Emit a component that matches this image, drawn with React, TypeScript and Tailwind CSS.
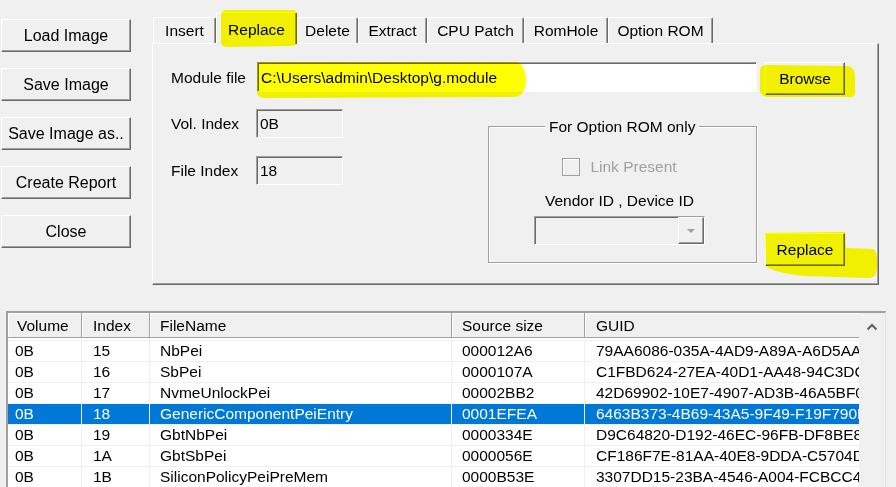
import React from 'react';

type Row = {
  volume: string;
  index: string;
  name: string;
  size: string;
  guid: string;
  selected?: boolean;
};

const rows: Row[] = [
  { volume: '0B', index: '15', name: 'NbPei', size: '000012A6', guid: '79AA6086-035A-4AD9-A89A-A6D5AA27F0E2' },
  { volume: '0B', index: '16', name: 'SbPei', size: '0000107A', guid: 'C1FBD624-27EA-40D1-AA48-94C3DC5C7E0D' },
  { volume: '0B', index: '17', name: 'NvmeUnlockPei', size: '00002BB2', guid: '42D69902-10E7-4907-AD3B-46A5BF0A1C4B' },
  { volume: '0B', index: '18', name: 'GenericComponentPeiEntry', size: '0001EFEA', guid: '6463B373-4B69-43A5-9F49-F19F790D5A11', selected: true },
  { volume: '0B', index: '19', name: 'GbtNbPei', size: '0000334E', guid: 'D9C64820-D192-46EC-96FB-DF8BE8A0C2E7' },
  { volume: '0B', index: '1A', name: 'GbtSbPei', size: '0000056E', guid: 'CF186F7E-81AA-40E8-9DDA-C5704D3B0E92' },
  { volume: '0B', index: '1B', name: 'SiliconPolicyPeiPreMem', size: '0000B53E', guid: '3307DD15-23BA-4546-A004-FCBCC47D87A5' },
];

const tabs = ['Insert', 'Replace', 'Delete', 'Extract', 'CPU Patch', 'RomHole', 'Option ROM'];
const tabWidths: Record<string, string> = {
  Insert: 'w-[63px]',
  Replace: 'w-[81px]',
  Delete: 'w-[61px]',
  Extract: 'w-[69px]',
  'CPU Patch': 'w-[97px]',
  RomHole: 'w-[84px]',
  'Option ROM': 'w-[105px]',
};

const raised =
  'border border-t-white border-l-white border-r-[#696969] border-b-[#696969] shadow-[inset_-1px_-1px_0_#a0a0a0] bg-[#f0f0f0]';
const sunken =
  'border border-t-[#a0a0a0] border-l-[#a0a0a0] border-r-white border-b-white shadow-[inset_1px_1px_0_#696969]';

function Button({ label, className = '' }: { label: string; className?: string }) {
  return <div className={`flex items-center justify-center ${raised} ${className}`}>{label}</div>;
}

function Highlights() {
  // marker strokes drawn over the screenshot
  return (
    <svg
      className="pointer-events-none absolute left-0 top-0 z-20 mix-blend-multiply"
      width="896"
      height="487"
      viewBox="0 0 896 487"
    >
      <g fill="#ffff00">
        <path d="M221,14 Q222,10 227,10 L292,10 Q297,10 297,15 L297,42 Q297,46 291,46 L228,47 Q221,47 221,42 Z" />
        <path d="M257,62 L516,62 Q525,64 526,79 Q526,96 514,97 L263,98 Q257,97 257,92 Z" />
        <path d="M760,69 Q761,65 767,65 L848,66 Q855,67 855,78 L855,94 Q854,98 847,97 L767,97 Q760,96 760,90 Z" />
        <path d="M765,233 L845,232 L846,248 L873,249 Q878,251 877,268 Q877,278 868,278 L805,276 Q774,273 766,266 Z" />
      </g>
    </svg>
  );
}

export default function App() {
  return (
    <div className="relative h-[487px] w-[896px] overflow-hidden bg-[#f0f0f0] font-['Liberation_Sans',Arial,sans-serif] text-[15.5px] leading-[19px] text-black">
      <div className="flex">
        <div className="flex w-[131px] flex-col gap-[16px] pl-[1px] pt-[19px] text-[16px]">
          <Button label="Load Image" className="h-[33px]" />
          <Button label="Save Image" className="h-[33px]" />
          <Button label="Save Image as.." className="h-[33px]" />
          <Button label="Create Report" className="h-[33px]" />
          <Button label="Close" className="h-[33px]" />
        </div>

        <div className="ml-[21px] pt-[12px]">
          <div className="ml-[1px] flex h-[31px] items-end">
            {tabs.map((t) =>
              t === 'Replace' ? (
                <div
                  key={t}
                  className={`relative z-10 -mb-px flex h-[32px] items-start justify-center rounded-t-[2px] border-l border-t border-white bg-[#f0f0f0] pt-[7px] shadow-[inset_-1px_0_0_#a0a0a0] ${tabWidths[t]} border-r border-r-[#696969]`}
                >
                  {t}
                </div>
              ) : (
                <div
                  key={t}
                  className={`flex h-[26px] items-center justify-center rounded-t-[2px] border-l border-t border-white border-r border-r-[#696969] shadow-[inset_-1px_0_0_#a0a0a0] ${tabWidths[t]}`}
                >
                  {t}
                </div>
              ),
            )}
          </div>

          <div className="h-[242px] w-[727px] border border-t-white border-l-white border-r-[#696969] border-b-[#696969] shadow-[inset_-1px_-1px_0_#a0a0a0]">
            <div className="flex items-start pl-[18px] pt-[18px]">
              <div className="flex h-[30px] w-[86px] items-center">Module file</div>
              <div className={`flex h-[30px] w-[500px] items-center bg-white pl-[3px] ${sunken}`}>
                C:\Users\admin\Desktop\g.module
              </div>
              <Button label="Browse" className="ml-[8px] h-[33px] w-[80px]" />
            </div>

            <div className="flex items-start pl-[18px]">
              <div className="w-[317px]">
                <div className="mt-[14px] flex items-center">
                  <div className="w-[85px]">Vol. Index</div>
                  <div className={`flex h-[29px] w-[87px] items-center pl-[3px] ${sunken}`}>0B</div>
                </div>
                <div className="mt-[18px] flex items-center">
                  <div className="w-[85px]">File Index</div>
                  <div className={`flex h-[29px] w-[87px] items-center pl-[3px] ${sunken}`}>18</div>
                </div>
              </div>

              <div className="relative mt-[31px] h-[137px] w-[269px] border border-[#a0a0a0] shadow-[inset_1px_1px_0_#fff,1px_1px_0_#fff]">
                <div className="absolute left-[56px] top-[-10px] bg-[#f0f0f0] px-[4px] whitespace-nowrap">
                  For Option ROM only
                </div>
                <div className="flex flex-col items-center pr-[6px] pt-[30px]">
                  <div className="flex items-center gap-[10px]">
                    <div className="h-[18px] w-[18px] border border-[#a0a0a0] bg-[#f0f0f0] shadow-[inset_1px_1px_0_#fff]" />
                    <span className="text-[#a0a0a0]">Link Present</span>
                  </div>
                  <div className="mt-[15px]">Vendor ID , Device ID</div>
                  <div className={`mt-[6px] flex h-[29px] w-[171px] justify-end bg-[#f0f0f0] ${sunken}`}>
                    <div className={`flex h-full w-[26px] items-center justify-center ${raised}`}>
                      <svg width="10" height="6" viewBox="0 0 10 6">
                        <path d="M1,1 L9,1 L5,5 Z" fill="#a0a0a0" />
                      </svg>
                    </div>
                  </div>
                </div>
              </div>

              <Button label="Replace" className="ml-[8px] mt-[138px] h-[33px] w-[80px]" />
            </div>
          </div>
        </div>
      </div>

      <div className="ml-[6px] mt-[26px] flex h-[176px] w-[880px] border-l-2 border-t-2 border-r border-[#a0a0a0] border-r-[#e3e3e3] bg-white">
        <div className="w-[851px] overflow-hidden">
          <div className="flex h-[25px] bg-[#f0f0f0] whitespace-nowrap">
            {[
              ['Volume', 'w-[74px] pl-[9px]'],
              ['Index', 'w-[68px] pl-[11px]'],
              ['FileName', 'w-[302px] pl-[10px]'],
              ['Source size', 'w-[133px] pl-[10px]'],
              ['GUID', 'w-[300px] pl-[11px]'],
            ].map(([h, cls]) => (
              <div
                key={h}
                className={`flex shrink-0 items-center border-b border-r border-[#a0a0a0] shadow-[inset_1px_1px_0_#fff] ${cls}`}
              >
                {h}
              </div>
            ))}
          </div>
          <div className="pt-[2px]">
            {rows.map((r) => (
              <div
                key={r.index}
                className={`flex h-[21px] border-t border-[#f0f0f0] whitespace-nowrap ${
                  r.selected ? 'bg-[#0078d7] text-white' : ''
                }`}
              >
                <div className="w-[74px] shrink-0 border-r border-[#f0f0f0] pl-[7px] leading-[20px]">{r.volume}</div>
                <div className="w-[68px] shrink-0 border-r border-[#f0f0f0] pl-[11px] leading-[20px]">{r.index}</div>
                <div className="w-[302px] shrink-0 border-r border-[#f0f0f0] pl-[10px] leading-[20px]">{r.name}</div>
                <div className="w-[133px] shrink-0 border-r border-[#f0f0f0] pl-[10px] leading-[20px]">{r.size}</div>
                <div className="w-[300px] shrink-0 overflow-hidden pl-[11px] leading-[20px]">{r.guid}</div>
              </div>
            ))}
          </div>
        </div>
        <div className="flex w-[26px] justify-center bg-[#f0f0f0] pt-[10px]">
          <svg width="12" height="8" viewBox="0 0 12 8">
            <polyline points="1.5,6.5 6,2 10.5,6.5" fill="none" stroke="#606060" strokeWidth="2" />
          </svg>
        </div>
      </div>

      <Highlights />
    </div>
  );
}
